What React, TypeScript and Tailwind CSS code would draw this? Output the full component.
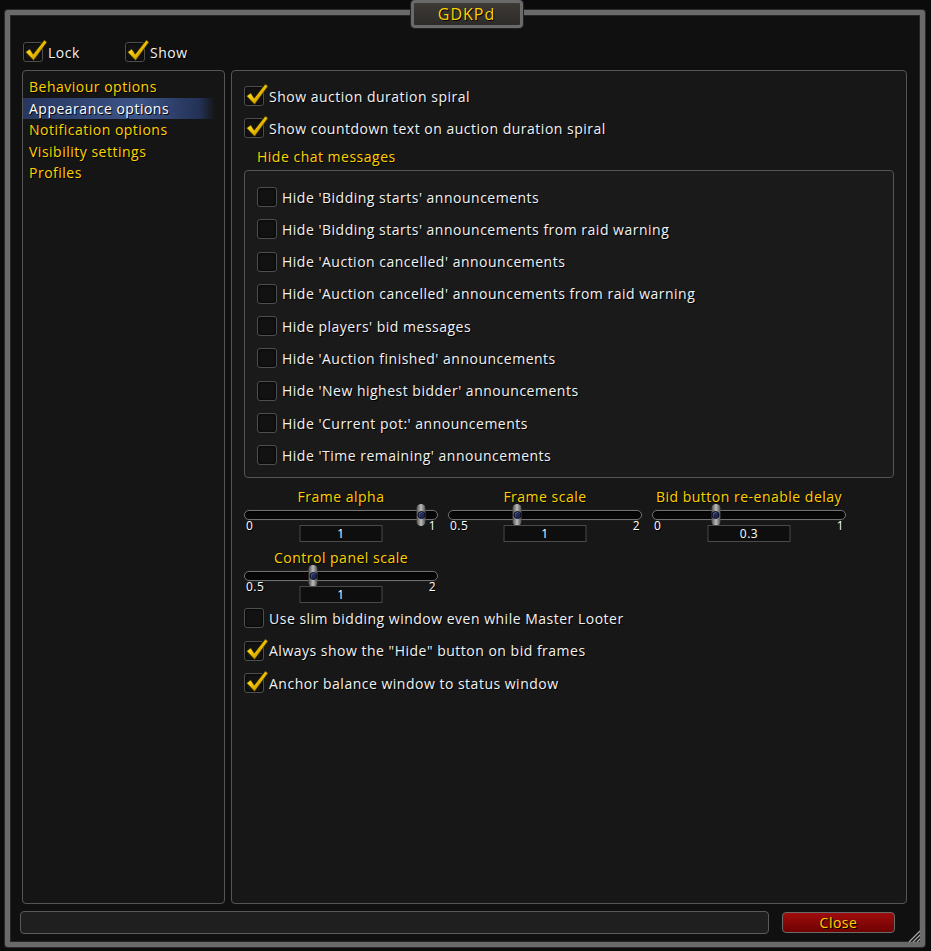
import React from "react";

const font = "font-['Open_Sans','DejaVu_Sans',sans-serif] tracking-[0.5px]";
const shadow = "[text-shadow:1px_1px_0_#000]";

const Check = ({ on }: { on: boolean }) => (
  <span className="relative inline-block w-5 h-5 shrink-0 rounded-[3px] border border-[#4e4e4e] bg-[#121212] shadow-[inset_0_0_3px_#000]">
    {on && (
      <svg className="absolute -left-[1px] -top-[5px]" width="25" height="25" viewBox="0 0 24 24">
        <defs>
          <linearGradient id="ck" x1="0" y1="0" x2="1" y2="1">
            <stop offset="0" stopColor="#fff68a" />
            <stop offset="0.45" stopColor="#f5c800" />
            <stop offset="1" stopColor="#9a6d00" />
          </linearGradient>
        </defs>
        <path d="M2.5 13.5 L6.5 10.5 L9.8 15.5 L20.5 2 L23 4 L10.2 21.5 Z" fill="url(#ck)" stroke="#3a2a00" strokeWidth="0.7" />
      </svg>
    )}
  </span>
);

const Option = ({ on, label }: { on: boolean; label: string }) => (
  <div className="flex items-center gap-[5px] h-5">
    <Check on={on} />
    <span className={`text-[14px] text-[#f2f2f2] ${shadow}`}>{label}</span>
  </div>
);

const Slider = ({
  label,
  min,
  max,
  value,
  frac,
}: {
  label: string;
  min: string;
  max: string;
  value: string;
  frac: number;
}) => (
  <div className="w-[194px] flex flex-col items-center">
    <div className={`text-[14px] leading-[18px] text-[#ffd100] ${shadow}`}>{label}</div>
    <div className="relative w-full h-[10px] mt-[4px] rounded-full border border-[#707070] bg-[#070707] shadow-[inset_0_1px_2px_#000,0_0_0_1px_#1c1c1c]">
      <span
        className="absolute top-1/2 -translate-x-1/2 -translate-y-1/2 w-[9px] h-[22px] rounded-full bg-[linear-gradient(90deg,#4a4a4a,#bdbdbd_50%,#4a4a4a)] flex items-center justify-center"
        style={{ left: 14 + frac * 162 }}
      >
        <span className="w-[8px] h-[8px] rounded-full bg-[#1d2750] border border-[#0b0f22] shadow-[inset_1px_1px_1px_#4a5a9a]" />
      </span>
    </div>
    <div className="relative w-full h-[22px]">
      <span className={`absolute left-[2px] -top-[2px] text-[12px] leading-[16px] text-white ${shadow}`}>{min}</span>
      <span className={`absolute right-[2px] -top-[2px] text-[12px] leading-[16px] text-white ${shadow}`}>{max}</span>
      <div className="absolute left-1/2 -translate-x-1/2 top-[5px] w-[83px] h-[17px] border border-[#4a4a4a] bg-[#0e0e0e] flex items-center justify-center text-[12px] text-white">
        {value}
      </div>
    </div>
  </div>
);

const hideRows = [
  "Hide 'Bidding starts' announcements",
  "Hide 'Bidding starts' announcements from raid warning",
  "Hide 'Auction cancelled' announcements",
  "Hide 'Auction cancelled' announcements from raid warning",
  "Hide players' bid messages",
  "Hide 'Auction finished' announcements",
  "Hide 'New highest bidder' announcements",
  "Hide 'Current pot:' announcements",
  "Hide 'Time remaining' announcements",
];

const nav = ["Behaviour options", "Appearance options", "Notification options", "Visibility settings", "Profiles"];

export default function App() {
  return (
    <div className={`relative w-[931px] h-[951px] bg-[#0b0b0b] overflow-hidden ${font}`}>
      <div className="ml-[5px] mt-[10px] w-[920px] h-[937px] border-[5px] border-[#6a6a6a] rounded-[3px] shadow-[0_0_0_1px_#2a2a2a,inset_0_0_0_1px_#262626] bg-[#101010] flex flex-col pl-[12px] pr-[13px] pt-[27px]">
        <div className="flex items-center h-5 pl-[1px]">
          <div className="flex items-center gap-[5px] w-[102px]">
            <Check on />
            <span className={`text-[14px] text-[#f2f2f2] ${shadow}`}>Lock</span>
          </div>
          <div className="flex items-center gap-[5px]">
            <Check on />
            <span className={`text-[14px] text-[#f2f2f2] ${shadow}`}>Show</span>
          </div>
        </div>

        <div className="flex gap-[6px] mt-[8px] h-[834px]">
          <div className="w-[203px] rounded-[4px] border border-[#555] bg-[#151515] pt-[5px]">
            {nav.map((n, i) => (
              <div
                key={n}
                className={`h-[21.5px] flex items-center pl-[6px] mr-[9px] text-[14px] ${shadow} ${
                  i === 1
                    ? "text-white bg-[linear-gradient(90deg,#27375f,#3d5488_60%,#233155_92%,transparent)]"
                    : "text-[#ffd100]"
                }`}
              >
                {n}
              </div>
            ))}
          </div>

          <div className="flex-1 rounded-[4px] border border-[#555] bg-[#171717] pl-[12px] pt-[15px]">
            <div className="flex flex-col gap-[12px]">
              <Option on label="Show auction duration spiral" />
              <Option on label="Show countdown text on auction duration spiral" />
            </div>
            <div className={`mt-[10px] ml-[13px] text-[14px] leading-[18px] text-[#ffd100] ${shadow}`}>Hide chat messages</div>
            <div className="mt-[4px] w-[650px] h-[308px] rounded-[4px] border border-[#555] bg-[#1a1a1a] pl-[12px] pt-[16px] flex flex-col gap-[12.3px]">
              {hideRows.map((r) => (
                <Option key={r} on={false} label={r} />
              ))}
            </div>
            <div className="mt-[10px] flex gap-[10px]">
              <Slider label="Frame alpha" min="0" max="1" value="1" frac={1} />
              <Slider label="Frame scale" min="0.5" max="2" value="1" frac={1 / 3} />
              <Slider label="Bid button re-enable delay" min="0" max="1" value="0.3" frac={0.3} />
            </div>
            <div className="mt-[7px]">
              <Slider label="Control panel scale" min="0.5" max="2" value="1" frac={1 / 3} />
            </div>
            <div className="mt-[5px] flex flex-col gap-[12.5px]">
              <Option on={false} label="Use slim bidding window even while Master Looter" />
              <Option on label={'Always show the "Hide" button on bid frames'} />
              <Option on label="Anchor balance window to status window" />
            </div>
          </div>
        </div>

        <div className="flex items-center mt-[7px] gap-[13px]">
          <div className="ml-[-2px] w-[749px] h-[23px] rounded-[4px] border border-[#5a5a5a] bg-[#1f1f1f]" />
          <button className="w-[113px] h-[21px] rounded-[4px] border border-[#6a6a6a] bg-[linear-gradient(180deg,#a00c0c,#6e0202)] text-[14px] leading-none text-[#ffd100] [text-shadow:1px_1px_0_#000] shadow-[0_0_0_1px_#111]">
            Close
          </button>
        </div>
      </div>

      <div className="absolute left-1/2 top-0 -translate-x-1/2 ml-[1px] w-[112px] h-[28px] rounded-[4px] border-[3px] border-[#6a6a6a] bg-[linear-gradient(180deg,#3d3a36,#2d2b28)] shadow-[0_0_0_1px_#222] flex items-center justify-center">
        <span className={`text-[16px] tracking-[1px] text-[#ffd100] ${shadow}`}>GDKPd</span>
      </div>

      <svg className="absolute right-[10px] bottom-[8px]" width="14" height="14" viewBox="0 0 14 14">
        <path d="M2 13 L13 2 M6 13 L13 6 M10 13 L13 10" stroke="#a8a8a8" strokeWidth="1.2" />
      </svg>
    </div>
  );
}
